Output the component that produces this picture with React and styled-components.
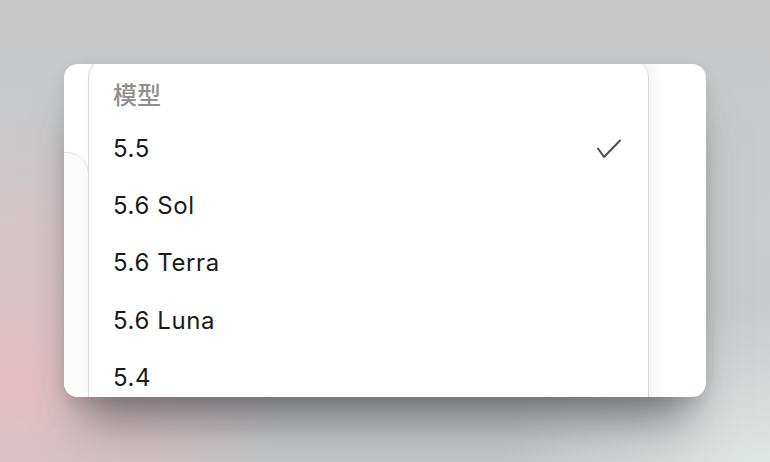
import React from "react";
import styled, { createGlobalStyle } from "styled-components";

const GlobalStyle = createGlobalStyle`
  html, body {
    margin: 0;
    padding: 0;
    height: 100%;
  }
  body {
    font-family: Inter, "Noto Sans CJK SC", sans-serif;
    background:
      radial-gradient(ellipse 340px 340px at 20px 380px, rgba(228, 190, 196, 1), rgba(228, 190, 196, 0) 78%),
      radial-gradient(ellipse 380px 240px at 770px 470px, rgba(226, 232, 230, 1), rgba(226, 232, 230, 0) 70%),
      linear-gradient(180deg, #c7c7c8 0%, #c9cbcc 50%, #c4c7c8 100%);
    overflow: hidden;
  }
`;

const Page = styled.div`
  width: 770px;
  height: 462px;
  box-sizing: border-box;
  padding: 64px 64px 0 64px;
`;

const Card = styled.div`
  position: relative;
  width: 642px;
  height: 333px;
  background: #ffffff;
  border-radius: 14px;
  overflow: hidden;
  box-shadow: 0 40px 44px -18px rgba(60, 60, 64, 0.6), 0 6px 16px rgba(0, 0, 0, 0.1);
`;

// sheet peeking out from behind the menu
const BackSheet = styled.div`
  position: absolute;
  top: 88px;
  left: -40px;
  width: 63px;
  height: 320px;
  border: 1px solid #e2e2e2;
  border-radius: 22px;
  background: #fcfcfc;
`;

const Menu = styled.div`
  position: relative;
  margin: -8px 0 0 24px;
  width: 561px;
  height: 400px;
  box-sizing: border-box;
  border: 1px solid #dadada;
  border-radius: 22px;
  background: #ffffff;
  box-shadow: 6px 0 14px rgba(0, 0, 0, 0.05);
  padding-top: 8px;
`;

const Header = styled.div`
  height: 55px;
  box-sizing: border-box;
  padding: 5px 0 0 24px;
  line-height: 48px;
  font-family: "Noto Sans CJK SC", Inter, sans-serif;
  font-size: 24px;
  font-weight: 500;
  color: #8f8f8f;
`;

const Item = styled.div`
  display: flex;
  align-items: center;
  justify-content: space-between;
  height: 57.2px;
  padding: 0 27px 0 24px;
  font-size: 24px;
  letter-spacing: 0.6px;
  color: #1b1b1b;
`;

const Check = () => (
  <svg width="24" height="20" viewBox="0 0 24 20" fill="none">
    <polyline
      points="1,9.5 7,18 23,1.5"
      stroke="#505050"
      strokeWidth="2"
      strokeLinecap="round"
      strokeLinejoin="round"
    />
  </svg>
);

const models = ["5.5", "5.6 Sol", "5.6 Terra", "5.6 Luna", "5.4"];

export default function App() {
  const selected = "5.5";
  return (
    <>
      <GlobalStyle />
      <Page>
        <Card>
          <BackSheet />
          <Menu>
            <Header>模型</Header>
            {models.map((m) => (
              <Item key={m}>
                <span>{m}</span>
                {m === selected && <Check />}
              </Item>
            ))}
          </Menu>
        </Card>
      </Page>
    </>
  );
}
